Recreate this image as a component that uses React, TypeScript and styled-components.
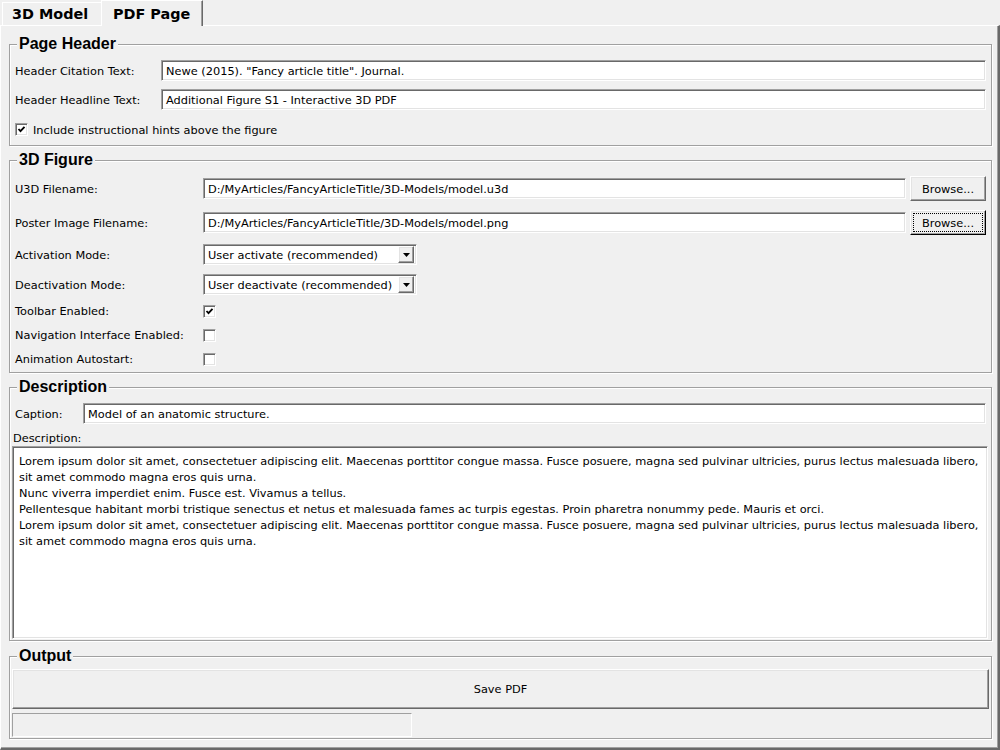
import React from "react";
import styled, { createGlobalStyle, css } from "styled-components";

const Global = createGlobalStyle`
  html, body { margin: 0; padding: 0; background: #f0f0f0; }
  body { font-family: "DejaVu Sans", Verdana, sans-serif; font-size: 11.35px; color: #000; }
  * { box-sizing: border-box; }
`;

const Window = styled.div`
  width: 1000px;
  height: 750px;
  background: #f0f0f0;
  display: flex;
  flex-direction: column;
  overflow: hidden;
`;

const TabBar = styled.div`
  height: 25px;
  flex: none;
  display: flex;
  align-items: flex-end;
  padding-left: 2px;
`;

const Tab = styled.div<{ $active?: boolean }>`
  font-family: "DejaVu Sans", Verdana, sans-serif;
  font-weight: bold;
  font-size: 14.4px;
  display: flex;
  align-items: center;
  background: #f0f0f0;
  border-top: 1px solid #fff;
  border-left: 1px solid #fff;
  ${(p) =>
    p.$active
      ? css`
          position: relative;
          z-index: 1;
          height: 26px;
          width: 102px;
          margin-bottom: -1px;
          padding-left: 11px;
          border-right: 1px solid #696969;
          box-shadow: inset -1px 0 0 #a0a0a0;
        `
      : css`
          height: 23px;
          width: 99px;
          padding-left: 9px;
        `}
`;

const Pane = styled.div`
  height: 725px;
  flex: none;
  border-top: 1px solid #fff;
  border-left: 1px solid #fff;
  border-right: 2px solid #696969;
  border-bottom: 2px solid #696969;
  box-shadow: inset -1px -1px 0 #a0a0a0;
  padding: 9px 6px 0 8px;
  display: flex;
  flex-direction: column;
  gap: 5px;
`;

const Group = styled.fieldset<{ $mt?: number }>`
  margin: ${(p) => p.$mt ?? 0}px 0 0 0;
  padding: 0 5px;
  min-width: 0;
  flex: none;
  border: 1px solid #a0a0a0;
  box-shadow: inset 1px 1px 0 #fff, 1px 1px 0 #fff;
`;

const Legend = styled.legend`
  font-family: "Liberation Sans", Arial, sans-serif;
  font-weight: bold;
  font-size: 16px;
  line-height: 18px;
  height: 18px;
  padding: 0 2px;
  margin-left: 2px;
  background: #f0f0f0;
`;

const Body = styled.div<{ $pt: number; $pb: number }>`
  display: flex;
  flex-direction: column;
  padding-top: ${(p) => p.$pt}px;
  padding-bottom: ${(p) => p.$pb}px;
`;

const Row = styled.div<{ $h: number; $mt?: number }>`
  display: flex;
  align-items: center;
  height: ${(p) => p.$h}px;
  margin-top: ${(p) => p.$mt ?? 0}px;
`;

const Label = styled.div<{ $w: number }>`
  width: ${(p) => p.$w}px;
  flex: none;
  white-space: nowrap;
`;

const sunken = css`
  border-top: 1px solid #a0a0a0;
  border-left: 1px solid #a0a0a0;
  border-bottom: 1px solid #fff;
  border-right: 1px solid #fff;
  box-shadow: inset 1px 1px 0 #696969, inset -1px -1px 0 #e3e3e3;
  background: #fff;
`;

const raised = css`
  border-top: 1px solid #fff;
  border-left: 1px solid #fff;
  border-bottom: 1px solid #696969;
  border-right: 1px solid #696969;
  box-shadow: inset -1px -1px 0 #a0a0a0, inset 1px 1px 0 #e3e3e3;
  background: #f0f0f0;
`;

const TextInput = styled.div`
  ${sunken};
  flex: 1;
  height: 21px;
  display: flex;
  align-items: center;
  padding-left: 4px;
  white-space: nowrap;
  overflow: hidden;
`;

const Button = styled.div<{ $focus?: boolean }>`
  ${raised};
  width: 76px;
  height: 25px;
  margin-left: 4px;
  flex: none;
  display: flex;
  align-items: center;
  justify-content: center;
  ${(p) =>
    p.$focus &&
    css`
      border-bottom-color: #000;
      border-right-color: #000;
      outline: 1px dotted #000;
      outline-offset: -4px;
    `}
`;

const Combo = styled.div`
  ${sunken};
  width: 214px;
  height: 21px;
  display: flex;
  align-items: center;
  padding: 2px 2px 2px 4px;
`;

const ComboText = styled.div`
  flex: 1;
  white-space: nowrap;
`;

const ComboArrow = styled.div`
  ${raised};
  width: 16px;
  height: 17px;
  flex: none;
  display: flex;
  align-items: center;
  justify-content: center;
`;

const CheckBox = styled.div`
  ${sunken};
  width: 13px;
  height: 13px;
  flex: none;
  display: flex;
  align-items: center;
  justify-content: center;
`;

const CheckLabel = styled.div`
  margin-left: 5px;
  white-space: nowrap;
`;

const SubLabel = styled.div`
  height: 15px;
  margin: 7px 0 0 -2px;
  line-height: 15px;
`;

const TextArea = styled.div`
  ${sunken};
  height: 193px;
  margin: 0 -2px 0 -3px;
  padding: 6px 6px;
  line-height: 16px;
  overflow: hidden;
`;

const Line = styled.div`
  white-space: nowrap;
`;

const BigButton = styled.div`
  ${raised};
  height: 40px;
  margin: 0 -3px;
  display: flex;
  align-items: center;
  justify-content: center;
`;

const Progress = styled.div`
  width: 400px;
  height: 24px;
  margin: 4px 0 0 -3px;
  border-top: 1px solid #a0a0a0;
  border-left: 1px solid #a0a0a0;
  border-bottom: 1px solid #fff;
  border-right: 1px solid #fff;
`;

const Check = ({ on }: { on?: boolean }) => (
  <CheckBox>
    {on && (
      <svg width="9" height="9" viewBox="0 0 9 9">
        <path d="M1.5 4 L3.5 6.2 L7.5 1.8" fill="none" stroke="#000" strokeWidth="1.8" />
      </svg>
    )}
  </CheckBox>
);

const Arrow = () => (
  <svg width="7" height="4" viewBox="0 0 7 4">
    <path d="M0 0 H7 L3.5 4 Z" fill="#000" />
  </svg>
);

export default function App() {
  return (
    <>
      <Global />
      <Window>
        <TabBar>
          <Tab>3D Model</Tab>
          <Tab $active>PDF Page</Tab>
        </TabBar>
        <Pane>
          <Group>
            <Legend>Page Header</Legend>
            <Body $pt={7} $pb={9}>
              <Row $h={21}>
                <Label $w={146}>Header Citation Text:</Label>
                <TextInput>Newe (2015). "Fancy article title". Journal.</TextInput>
              </Row>
              <Row $h={21} $mt={8}>
                <Label $w={146}>Header Headline Text:</Label>
                <TextInput>Additional Figure S1 - Interactive 3D PDF</TextInput>
              </Row>
              <Row $h={13} $mt={13}>
                <Check on />
                <CheckLabel>Include instructional hints above the figure</CheckLabel>
              </Row>
            </Body>
          </Group>

          <Group>
            <Legend>3D Figure</Legend>
            <Body $pt={7} $pb={1}>
              <Row $h={25}>
                <Label $w={188}>U3D Filename:</Label>
                <TextInput>D:/MyArticles/FancyArticleTitle/3D-Models/model.u3d</TextInput>
                <Button>Browse...</Button>
              </Row>
              <Row $h={25} $mt={9}>
                <Label $w={188}>Poster Image Filename:</Label>
                <TextInput>D:/MyArticles/FancyArticleTitle/3D-Models/model.png</TextInput>
                <Button $focus>Browse...</Button>
              </Row>
              <Row $h={21} $mt={9}>
                <Label $w={188}>Activation Mode:</Label>
                <Combo>
                  <ComboText>User activate (recommended)</ComboText>
                  <ComboArrow>
                    <Arrow />
                  </ComboArrow>
                </Combo>
              </Row>
              <Row $h={21} $mt={9}>
                <Label $w={188}>Deactivation Mode:</Label>
                <Combo>
                  <ComboText>User deactivate (recommended)</ComboText>
                  <ComboArrow>
                    <Arrow />
                  </ComboArrow>
                </Combo>
              </Row>
              <Row $h={24} $mt={4}>
                <Label $w={188}>Toolbar Enabled:</Label>
                <Check on />
              </Row>
              <Row $h={24}>
                <Label $w={188}>Navigation Interface Enabled:</Label>
                <Check />
              </Row>
              <Row $h={24}>
                <Label $w={188}>Animation Autostart:</Label>
                <Check />
              </Row>
            </Body>
          </Group>

          <Group>
            <Legend>Description</Legend>
            <Body $pt={7} $pb={1}>
              <Row $h={21}>
                <Label $w={68}>Caption:</Label>
                <TextInput>Model of an anatomic structure.</TextInput>
              </Row>
              <SubLabel>Description:</SubLabel>
              <TextArea>
                <Line>
                  Lorem ipsum dolor sit amet, consectetuer adipiscing elit. Maecenas porttitor congue massa. Fusce posuere, magna sed pulvinar ultricies, purus lectus malesuada libero,
                </Line>
                <Line>sit amet commodo magna eros quis urna.</Line>
                <Line>Nunc viverra imperdiet enim. Fusce est. Vivamus a tellus.</Line>
                <Line>
                  Pellentesque habitant morbi tristique senectus et netus et malesuada fames ac turpis egestas. Proin pharetra nonummy pede. Mauris et orci.
                </Line>
                <Line>
                  Lorem ipsum dolor sit amet, consectetuer adipiscing elit. Maecenas porttitor congue massa. Fusce posuere, magna sed pulvinar ultricies, purus lectus malesuada libero,
                </Line>
                <Line>sit amet commodo magna eros quis urna.</Line>
              </TextArea>
            </Body>
          </Group>

          <Group $mt={1}>
            <Legend>Output</Legend>
            <Body $pt={4} $pb={1}>
              <BigButton>Save PDF</BigButton>
              <Progress />
            </Body>
          </Group>
        </Pane>
      </Window>
    </>
  );
}
